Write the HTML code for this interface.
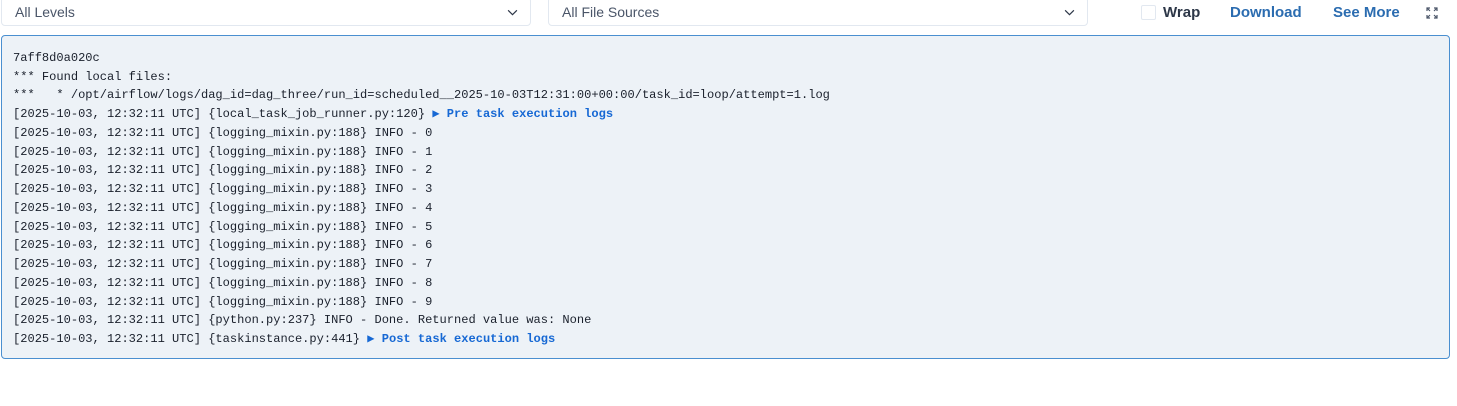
<!DOCTYPE html>
<html><head><style>
body{margin:0;width:1457px;height:406px;background:#fff;position:relative;overflow:hidden;font-family:"Liberation Sans",sans-serif}
.sel{position:absolute;top:-3px;height:29px;border:1px solid #e2e8f0;border-radius:4px;box-sizing:border-box;color:#4a5568;font-size:14px;line-height:29px;padding-left:13px}
.sel svg{position:absolute;right:12px;top:11px}
.lnk{position:absolute;top:4px;font-size:15px;font-weight:bold;color:#2b6cb0}
.box{position:absolute;left:1px;top:35px;width:1449px;height:324px;box-sizing:border-box;border:1px solid #4a8fd0;border-radius:4px;background:#edf2f7}
pre{margin:0;position:absolute;left:11px;top:13px;font-family:"Liberation Mono",monospace;font-size:12.05px;line-height:18.73px;color:#1a202c}
b{color:#1668d4}
</style></head><body>
<div class="sel" style="left:1px;width:530px">All Levels<svg width="11" height="7" viewBox="0 0 12 8"><path d="M1 1.5l5 5 5-5" stroke="#2d3748" stroke-width="1.4" fill="none"/></svg></div>
<div class="sel" style="left:548px;width:540px">All File Sources<svg width="11" height="7" viewBox="0 0 12 8"><path d="M1 1.5l5 5 5-5" stroke="#2d3748" stroke-width="1.4" fill="none"/></svg></div>
<div style="position:absolute;left:1141px;top:5px;width:13px;height:13px;border:1.5px solid #e2e8f0;border-radius:2px"></div>
<div class="lnk" style="left:1163px;color:#2d3748">Wrap</div>
<div class="lnk" style="left:1230px">Download</div>
<div class="lnk" style="left:1333px">See More</div>
<svg style="position:absolute;left:1426px;top:7px" width="12" height="12" viewBox="0 0 12 12" stroke="#4a5568" stroke-width="1.2" fill="none"><path d="M1 4V1h3M8 1h3v3M11 8v3H8M4 11H1V8M1 1l3 3M11 1L8 4M11 11L8 8M1 11l3-3"/></svg>
<div class="box"><pre>7aff8d0a020c
*** Found local files:
***   * /opt/airflow/logs/dag_id=dag_three/run_id=scheduled__2025-10-03T12:31:00+00:00/task_id=loop/attempt=1.log
[2025-10-03, 12:32:11 UTC] {local_task_job_runner.py:120} <b>▶ Pre task execution logs</b>
[2025-10-03, 12:32:11 UTC] {logging_mixin.py:188} INFO - 0
[2025-10-03, 12:32:11 UTC] {logging_mixin.py:188} INFO - 1
[2025-10-03, 12:32:11 UTC] {logging_mixin.py:188} INFO - 2
[2025-10-03, 12:32:11 UTC] {logging_mixin.py:188} INFO - 3
[2025-10-03, 12:32:11 UTC] {logging_mixin.py:188} INFO - 4
[2025-10-03, 12:32:11 UTC] {logging_mixin.py:188} INFO - 5
[2025-10-03, 12:32:11 UTC] {logging_mixin.py:188} INFO - 6
[2025-10-03, 12:32:11 UTC] {logging_mixin.py:188} INFO - 7
[2025-10-03, 12:32:11 UTC] {logging_mixin.py:188} INFO - 8
[2025-10-03, 12:32:11 UTC] {logging_mixin.py:188} INFO - 9
[2025-10-03, 12:32:11 UTC] {python.py:237} INFO - Done. Returned value was: None
[2025-10-03, 12:32:11 UTC] {taskinstance.py:441} <b>▶ Post task execution logs</b></pre></div>
</body></html>
